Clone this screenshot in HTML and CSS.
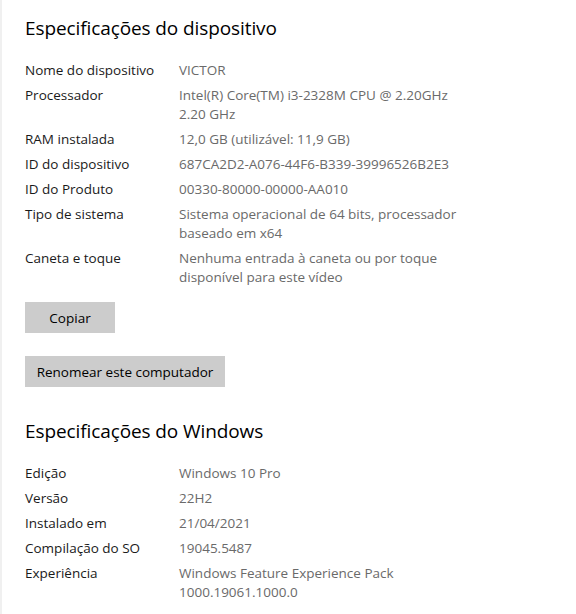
FILE: index.html
```html
<!DOCTYPE html>
<html lang="pt">
<head>
<meta charset="utf-8">
<link rel="stylesheet" href="styles.css">
</head>
<body>
<div class="page">
  <h1 class="title">Especificações do dispositivo</h1>
  <dl class="specs">
    <dt>Nome do dispositivo</dt><dd>VICTOR</dd>
    <dt>Processador</dt><dd>Intel(R) Core(TM) i3-2328M CPU @ 2.20GHz<br>2.20 GHz</dd>
    <dt>RAM instalada</dt><dd>12,0 GB (utilizável: 11,9 GB)</dd>
    <dt>ID do dispositivo</dt><dd>687CA2D2-A076-44F6-B339-39996526B2E3</dd>
    <dt>ID do Produto</dt><dd>00330-80000-00000-AA010</dd>
    <dt>Tipo de sistema</dt><dd>Sistema operacional de 64 bits, processador<br>baseado em x64</dd>
    <dt>Caneta e toque</dt><dd>Nenhuma entrada à caneta ou por toque<br>disponível para este vídeo</dd>
  </dl>
  <div class="actions">
    <button class="btn btn-copy">Copiar</button>
    <button class="btn btn-rename">Renomear este computador</button>
  </div>
  <h1 class="title title-win">Especificações do Windows</h1>
  <dl class="specs">
    <dt>Edição</dt><dd>Windows 10 Pro</dd>
    <dt>Versão</dt><dd>22H2</dd>
    <dt>Instalado em</dt><dd>21/04/2021</dd>
    <dt>Compilação do SO</dt><dd>19045.5487</dd>
    <dt>Experiência</dt><dd>Windows Feature Experience Pack<br>1000.19061.1000.0</dd>
  </dl>
</div>
</body>
</html>
```
FILE: styles.css
```css
html, body {
  margin: 0;
  padding: 0;
  background: #ffffff;
}
body {
  font-family: "Open Sans", "Noto Sans", sans-serif;
  color: #000;
  border-left: 2px solid #f0f0f0;
  min-height: 614px;
  box-sizing: border-box;
}
.page {
  padding: 15px 0 0 23px;
}
.title {
  margin: 0;
  font-size: 19px;
  font-weight: 400;
  line-height: 26px;
  color: #000;
  letter-spacing: -0.1px;
}
.specs {
  display: grid;
  grid-template-columns: 154px auto;
  row-gap: 6px;
  margin: 20px 0 0 0;
  font-size: 13.5px;
  line-height: 19px;
}
.specs dt, .specs dd {
  margin: 0;
}
.specs dt {
  color: #1a1a1a;
}
.specs dd {
  color: #6a6a6a;
}
.actions {
  display: flex;
  flex-direction: column;
  align-items: flex-start;
  gap: 23px;
  margin-top: 15px;
}
.btn {
  font-family: inherit;
  font-size: 13.5px;
  color: #000;
  background: #cccccc;
  border: none;
  height: 31px;
  padding: 0 10px;
}
.btn-copy {
  width: 90px;
}
.btn-rename {
  width: 200px;
}
.title-win {
  margin-top: 31px;
}
```
